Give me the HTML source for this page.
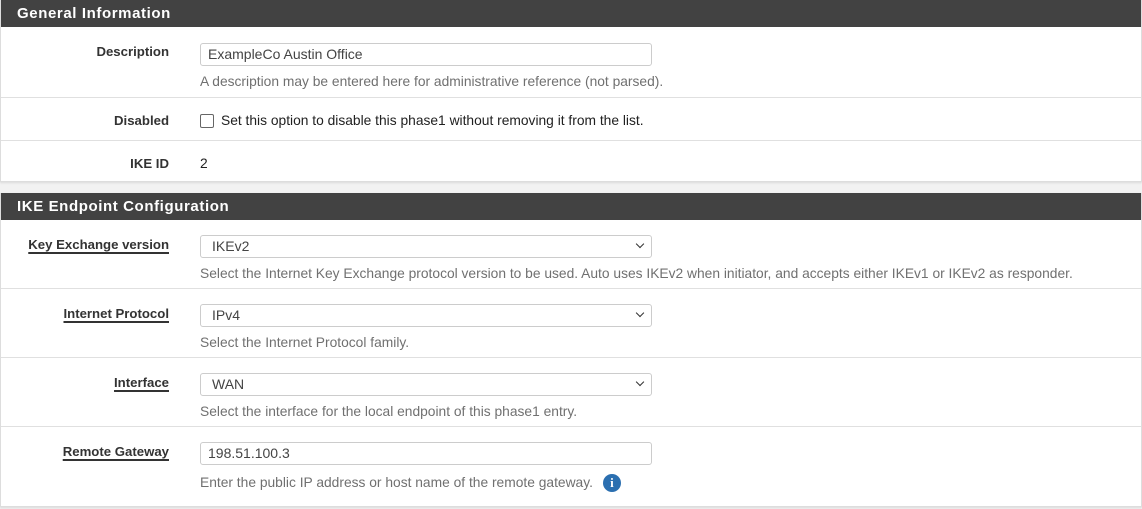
<!DOCTYPE html>
<html><head><style>
body{margin:0;background:#f2f2f2;font-family:"Liberation Sans",sans-serif;font-size:13.8px;color:#212121;width:1142px;height:509px;overflow:hidden}
.panel{position:absolute;left:0;width:1140px;background:#fff;border:1px solid #ddd;border-top:none;box-shadow:0 1px 2px rgba(0,0,0,.1)}
.hd{background:#424242;color:#fff;font-weight:bold;font-size:15px;letter-spacing:.6px;height:27px;line-height:28px;padding-left:16px}
.row{position:relative;border-top:1px solid #e0e0e0}
.lbl{position:absolute;right:972px;font-weight:bold;white-space:nowrap;color:#333;font-size:13.2px}
.lbl.u{text-decoration:underline;text-decoration-thickness:1.5px;text-underline-offset:3px}
.ctl{position:absolute;left:199px}
.inp{width:452px;height:23px;border:1px solid #ccc;border-radius:3px;box-sizing:border-box;padding-left:7px;line-height:21px;font-size:14px;position:relative;color:#444}
.inp.sel{padding-left:11px}
.inp.sel:after{content:"";position:absolute;right:8px;top:5px;width:5px;height:5px;border-right:1.5px solid #333;border-bottom:1.5px solid #333;transform:rotate(45deg)}
.help{color:#707070;margin-top:8px;white-space:nowrap}
.cb{display:inline-block;width:12px;height:12px;border:1px solid #666;border-radius:2px;vertical-align:-3px;margin-right:7px}
.info{display:inline-block;width:18px;height:18px;border-radius:50%;background:#2b6fb0;color:#fff;font-weight:bold;font-family:"Liberation Serif",serif;text-align:center;line-height:18px;font-size:13px;margin-left:10px;vertical-align:0}
</style></head><body>
<div class="panel" style="top:0;height:181px">
<div class="hd">General Information</div>
<div class="row" style="height:70px;border-top:none"><div class="lbl" style="top:17px">Description</div><div class="ctl" style="top:16px"><div class="inp">ExampleCo Austin Office</div><div class="help">A description may be entered here for administrative reference (not parsed).</div></div></div>
<div class="row" style="height:42px"><div class="lbl" style="top:15px">Disabled</div><div class="ctl" style="top:15px"><span class="cb"></span>Set this option to disable this phase1 without removing it from the list.</div></div>
<div class="row" style="height:39px"><div class="lbl" style="top:15px">IKE ID</div><div class="ctl" style="top:15px">2</div></div>
</div>
<div class="panel" style="top:193px;height:313px">
<div class="hd">IKE Endpoint Configuration</div>
<div class="row" style="height:68px;border-top:none"><div class="lbl u" style="top:17px">Key Exchange version</div><div class="ctl" style="top:15px"><div class="inp sel">IKEv2</div><div class="help">Select the Internet Key Exchange protocol version to be used. Auto uses IKEv2 when initiator, and accepts either IKEv1 or IKEv2 as responder.</div></div></div>
<div class="row" style="height:68px"><div class="lbl u" style="top:17px">Internet Protocol</div><div class="ctl" style="top:15px"><div class="inp sel">IPv4</div><div class="help">Select the Internet Protocol family.</div></div></div>
<div class="row" style="height:68px"><div class="lbl u" style="top:17px">Interface</div><div class="ctl" style="top:15px"><div class="inp sel">WAN</div><div class="help">Select the interface for the local endpoint of this phase1 entry.</div></div></div>
<div class="row" style="height:78px"><div class="lbl u" style="top:17px">Remote Gateway</div><div class="ctl" style="top:15px"><div class="inp">198.51.100.3</div><div class="help" style="margin-top:9px">Enter the public IP address or host name of the remote gateway.<span class="info">i</span></div></div></div>
</div>
</body></html>
